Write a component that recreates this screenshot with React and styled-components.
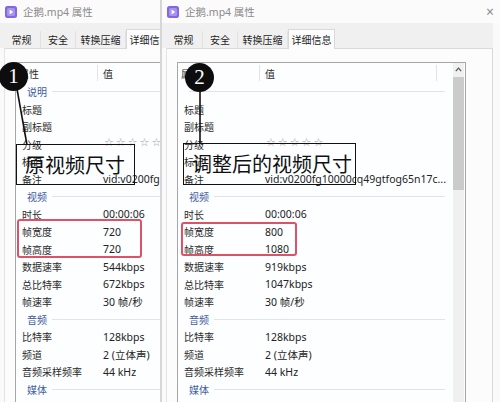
import React from 'react';
import styled, { createGlobalStyle } from 'styled-components';

const GlobalStyle = createGlobalStyle`
  html, body {
    margin: 0;
    padding: 0;
    background: #fafafa;
  }
  body {
    font-family: "Noto Sans", "Noto Sans CJK SC", sans-serif;
  }
`;

const NOTE = 'vid:v0200fg10000cq49gtfog65n17c...';
const STARS = '☆☆☆☆☆';

const tabs = [
  { label: '常规', w: 38 },
  { label: '安全', w: 35 },
  { label: '转换压缩', w: 50 },
  { label: '详细信息', w: 47, active: true },
];

const makeGroups = (intro, w, h, rate, total) => [
  {
    title: intro,
    rows: [
      ['标题', ''],
      ['副标题', ''],
      ['分级', STARS],
      ['标记', ''],
      ['备注', NOTE],
    ],
  },
  {
    title: '视频',
    rows: [
      ['时长', '00:00:06'],
      ['帧宽度', w],
      ['帧高度', h],
      ['数据速率', rate],
      ['总比特率', total],
      ['帧速率', '30 帧/秒'],
    ],
  },
  {
    title: '音频',
    rows: [
      ['比特率', '128kbps'],
      ['频道', '2 (立体声)'],
      ['音频采样频率', '44 kHz'],
    ],
  },
  { title: '媒体', rows: [] },
];

const original = makeGroups('说明', '720', '720', '544kbps', '672kbps');
const resized = makeGroups('', '800', '1080', '919kbps', '1047kbps');

const Dialog = ({ groups }) => (
  <Window>
    <TitleBar>
      <svg width="12" height="12" viewBox="0 0 12 12">
        <rect x="0" y="0" width="12" height="12" rx="2.5" fill="#8266e3" />
        <rect x="2" y="2" width="8" height="8" rx="1.5" fill="#a892f0" />
        <path d="M4.6 3.6 L8.2 6 L4.6 8.4 Z" fill="#fff" />
      </svg>
      <TitleText>企鹅.mp4 属性</TitleText>
      <Close>×</Close>
    </TitleBar>
    <Body>
      <TabBar>
        {tabs.map((t) => (
          <Tab key={t.label} $w={t.w} $active={t.active}>
            {t.label}
          </Tab>
        ))}
      </TabBar>
      <Panel>
        <ListBox>
          <ListContent>
            <Header>
              <HeaderCell $w={82} $divider>属性</HeaderCell>
              <HeaderCell $w={177} $divider $pad={5}>值</HeaderCell>
            </Header>
            {groups.map((group, gi) => (
              <React.Fragment key={gi}>
                <GroupRow>
                  {group.title && <GroupTitle>{group.title}</GroupTitle>}
                  <GroupLine />
                </GroupRow>
                {group.rows.map(([label, value], ri) => (
                  <Row key={ri}>
                    <Label>{label}</Label>
                    {value === STARS ? <Stars>{value}</Stars> : <Value>{value}</Value>}
                  </Row>
                ))}
              </React.Fragment>
            ))}
          </ListContent>
          <Scrollbar>
            <ScrollArrow>
              <svg width="7" height="5" viewBox="0 0 7 5">
                <path d="M0.8 4.2 L3.5 1.2 L6.2 4.2" fill="none" stroke="#555" strokeWidth="1.2" />
              </svg>
            </ScrollArrow>
            <ScrollThumb />
          </Scrollbar>
        </ListBox>
      </Panel>
    </Body>
  </Window>
);

const App = () => {
  return (
    <>
      <GlobalStyle />
      <Stage>
        <Pane $w={160}>
          <Dialog groups={original} />
        </Pane>
        <Divider />
        <Pane $w={338}>
          <Dialog groups={resized} />
        </Pane>

        <Highlight style={{ left: 17, top: 219, width: 125, height: 39 }} />
        <Highlight style={{ left: 181, top: 222, width: 116, height: 34 }} />

        <Connectors width="500" height="402">
          <line x1="17" y1="89" x2="27" y2="145" stroke="#111" strokeWidth="1.6" />
          <line x1="200" y1="91" x2="200" y2="144" stroke="#111" strokeWidth="1.6" />
        </Connectors>

        <Badge style={{ left: -1, top: 62 }}>1</Badge>
        <Badge style={{ left: 185, top: 63 }}>2</Badge>

        <Callout style={{ left: 16, top: 144, width: 119, height: 41 }}>原视频尺寸</Callout>
        <Callout style={{ left: 183, top: 143, width: 173, height: 42 }}>调整后的视频尺寸</Callout>
      </Stage>
    </>
  );
};

const Stage = styled.div`
  position: relative;
  width: 500px;
  height: 402px;
  overflow: hidden;
  display: flex;
  background: #f6f6f6;
`;

const Pane = styled.div`
  flex: none;
  width: ${(p) => p.$w}px;
  height: 402px;
  overflow: hidden;
`;

const Divider = styled.div`
  flex: none;
  width: 2px;
  background: #d6d6d6;
`;

const Window = styled.div`
  width: 338px;
  height: 402px;
  display: flex;
  flex-direction: column;
  background: #fafafa;
`;

const TitleBar = styled.div`
  height: 23px;
  flex: none;
  display: flex;
  align-items: center;
  gap: 6px;
  padding: 0 6px 0 5px;
  background: #fbfbfb;
`;

const TitleText = styled.span`
  font-size: 10.5px;
  color: #8a8a8a;
  white-space: nowrap;
`;

const Close = styled.span`
  margin-left: auto;
  font-size: 14px;
  line-height: 1;
  color: #8c8c8c;
`;

const Body = styled.div`
  flex: 1;
  display: flex;
  flex-direction: column;
  margin-right: 7px;
  min-height: 0;
`;

const TabBar = styled.div`
  height: 25px;
  flex: none;
  display: flex;
  align-items: flex-end;
  padding-left: 3px;
  background: #f0f0f0;
`;

const Tab = styled.div`
  flex: none;
  width: ${(p) => p.$w}px;
  height: ${(p) => (p.$active ? 20 : 17)}px;
  display: flex;
  align-items: center;
  justify-content: center;
  font-size: 10px;
  color: #1e1e1e;
  white-space: nowrap;
  box-sizing: border-box;
  background: ${(p) => (p.$active ? '#fdfdfd' : '#f0f0f0')};
  border: ${(p) => (p.$active ? '1px solid #d8d8d8' : 'none')};
  border-bottom: none;
  border-right: ${(p) => (p.$active ? '1px solid #d8d8d8' : '1px solid #e2e2e2')};
  margin-bottom: ${(p) => (p.$active ? '-1px' : '0')};
  position: relative;
  z-index: ${(p) => (p.$active ? 1 : 0)};
`;

const Panel = styled.div`
  flex: 1;
  display: flex;
  flex-direction: column;
  margin-left: 4px;
  padding: 13px 26px 0 10px;
  background: #fcfcfd;
  border-top: 1px solid #dadada;
  border-left: 1px solid #e4e4e4;
  border-right: 1px solid #d9d9d9;
  min-height: 0;
`;

const ListBox = styled.div`
  flex: 1;
  display: flex;
  border: 1px solid #a6a6a6;
  border-bottom: none;
  background: #fdfeff;
  min-height: 0;
`;

const ListContent = styled.div`
  flex: 1;
  min-width: 0;
  display: flex;
  flex-direction: column;
`;

const Header = styled.div`
  height: 20px;
  flex: none;
  display: flex;
  align-items: center;
`;

const HeaderCell = styled.div`
  flex: none;
  width: ${(p) => p.$w}px;
  height: 16px;
  display: flex;
  align-items: center;
  padding-left: ${(p) => p.$pad ?? 3}px;
  box-sizing: border-box;
  font-size: 10px;
  color: #2a2a2a;
  border-right: ${(p) => (p.$divider ? '1px solid #e3e3e3' : 'none')};
`;

const GroupRow = styled.div`
  height: 17.5px;
  flex: none;
  display: flex;
  align-items: center;
  padding-left: 11px;
  margin-right: 8px;
`;

const GroupTitle = styled.span`
  font-size: 10px;
  color: #3d5c9e;
  margin-right: 5px;
  white-space: nowrap;
`;

const GroupLine = styled.div`
  flex: 1;
  height: 1px;
  background: #dfe4ea;
`;

const Row = styled.div`
  height: 17.5px;
  flex: none;
  display: flex;
  align-items: center;
`;

const Label = styled.div`
  flex: none;
  width: 82px;
  padding-left: 6px;
  box-sizing: border-box;
  font-size: 10px;
  color: #2b2b2b;
  white-space: nowrap;
`;

const Value = styled.div`
  padding-left: 5px;
  font-size: 10.5px;
  color: #222;
  white-space: nowrap;
  overflow: hidden;
`;

const Stars = styled.div`
  padding-left: 6px;
  margin-top: -3px;
  font-family: "DejaVu Sans", sans-serif;
  font-size: 11px;
  letter-spacing: 2px;
  color: #9d9d9d;
  white-space: nowrap;
`;

const Scrollbar = styled.div`
  flex: none;
  width: 11px;
  margin-right: 1px;
  display: flex;
  flex-direction: column;
  background: #f0f0f0;
`;

const ScrollArrow = styled.div`
  height: 13px;
  display: flex;
  align-items: center;
  justify-content: center;
`;

const ScrollThumb = styled.div`
  height: 113px;
  margin-top: 1px;
  background: #cbcbcb;
`;

const Highlight = styled.div`
  position: absolute;
  box-sizing: border-box;
  border: 2px solid #de5266;
  border-radius: 3px;
`;

const Connectors = styled.svg`
  position: absolute;
  left: 0;
  top: 0;
  pointer-events: none;
`;

const Badge = styled.div`
  position: absolute;
  width: 29px;
  height: 29px;
  border-radius: 50%;
  background: #0d0d0d;
  color: #fff;
  display: flex;
  align-items: center;
  justify-content: center;
  font-family: "Liberation Serif", serif;
  font-size: 21px;
  line-height: 1;
`;

const Callout = styled.div`
  position: absolute;
  box-sizing: border-box;
  border: 1.5px solid #111;
  padding: 7px 0 0 8px;
  font-family: "Noto Sans CJK SC", sans-serif;
  font-size: 20px;
  line-height: 26px;
  color: #111;
  white-space: nowrap;
`;

export default App;
